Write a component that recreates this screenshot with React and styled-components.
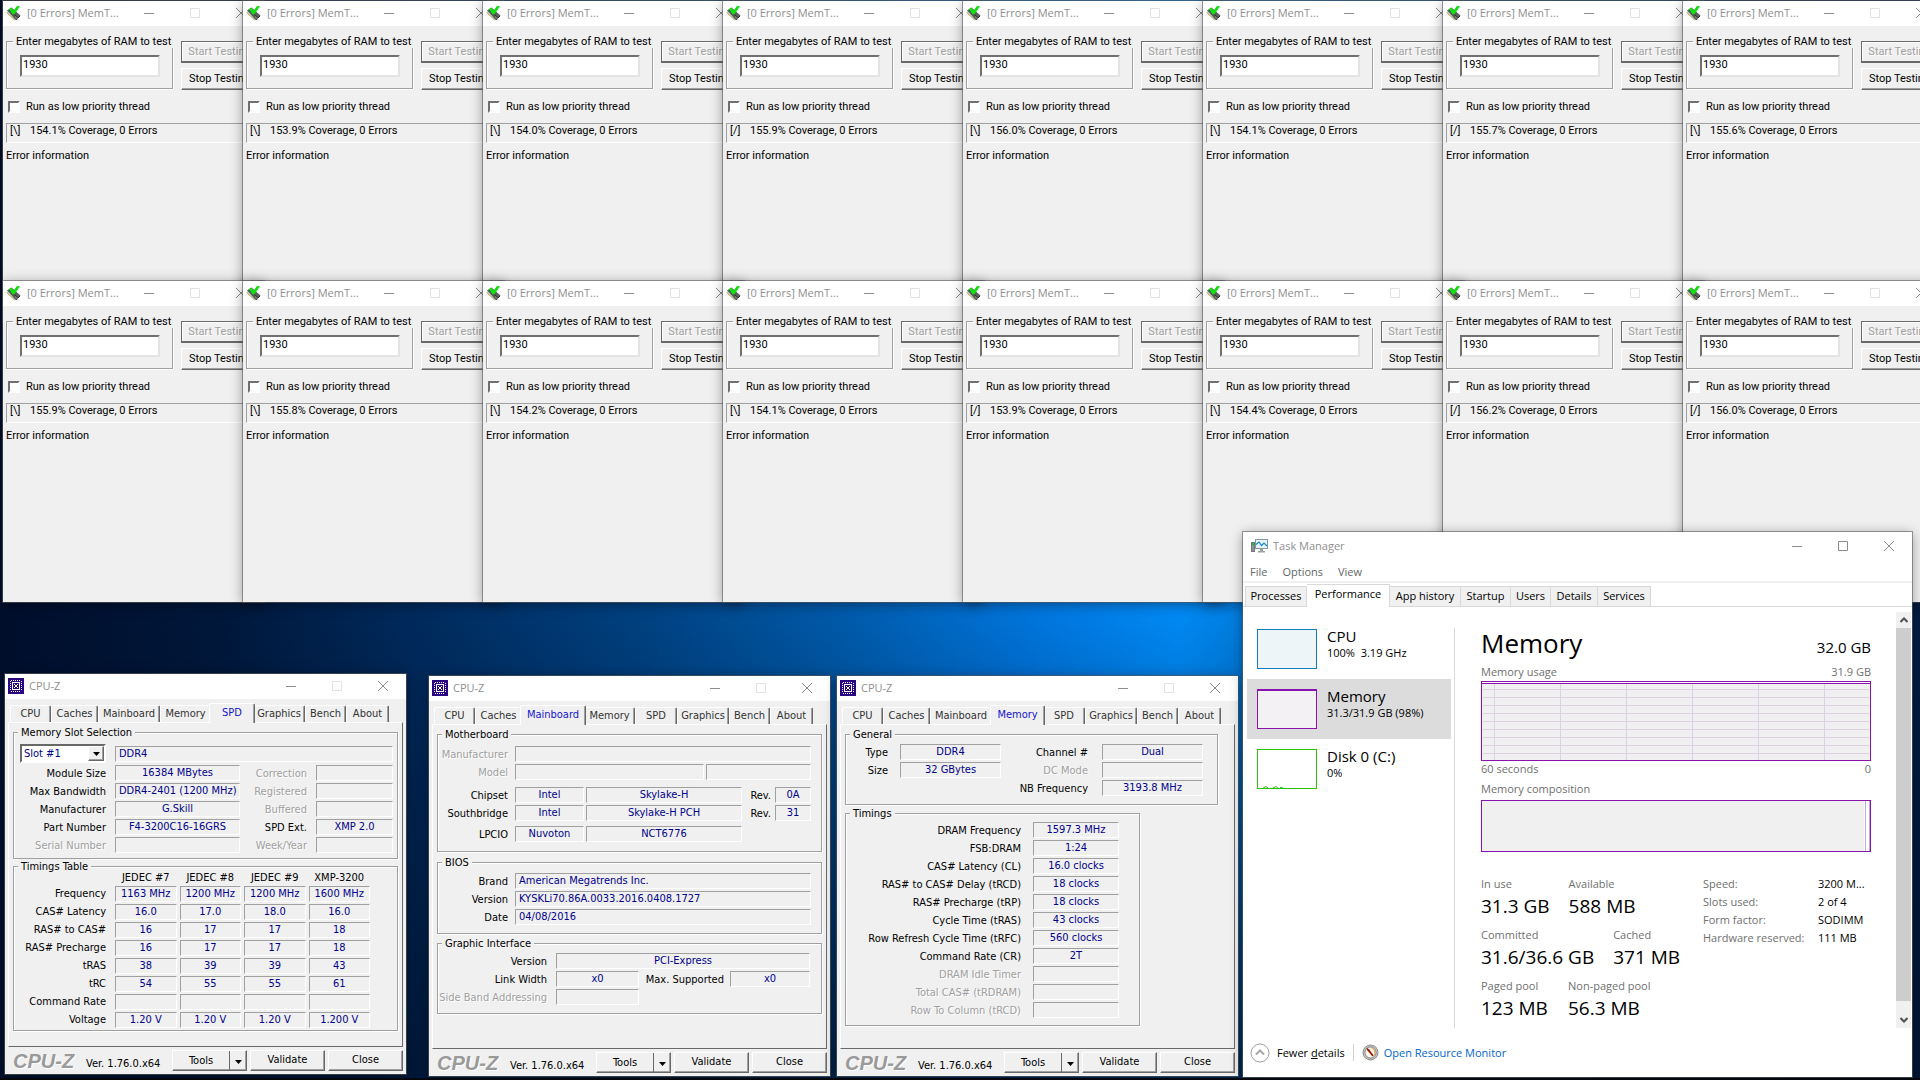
import React from "react";
import styled, { createGlobalStyle, css } from "styled-components";

const face = "#f0f0f0";
const shade = "#a0a0a0";
const dark = "#696969";
const navy = "#00008b";
const purple = "#8b12ae";

const memFont = 'Roboto, "Liberation Sans", Arial, sans-serif';
const cpuzFont = '"DejaVu Sans Condensed", Tahoma, "DejaVu Sans", sans-serif';
const uiFont = '"Open Sans", "Segoe UI", "Noto Sans", sans-serif';

const GlobalStyle = createGlobalStyle`
  *, *::before, *::after { box-sizing: border-box; }
  body { margin: 0; background: #00102c; color: #000; }
  button, input, select { font: inherit; color: inherit; }
`;

/* ---------- desktop and windows ---------- */

const Desktop = styled.main`
  position: relative;
  min-height: 100vh;
  overflow: hidden;
  border-bottom: 2px solid #05070c;
  background:
    linear-gradient(180deg, transparent 620px, rgba(0, 18, 45, 0.25) 760px, rgba(0, 18, 45, 0.75) 100%),
    linear-gradient(90deg, #000e2b 0, #00173a 220px, #002a5c 420px, #00407f 640px,
      #0059a8 840px, #0075dc 1040px, #0088f2 1180px, #0070c8 1300px, #002450 1800px, #001d45 100%);
`;

const Window = styled.section`
  position: absolute;
  left: ${(p) => p.$x}px;
  top: ${(p) => p.$y}px;
  width: ${(p) => p.$width}px;
  min-height: ${(p) => p.$height}px;
  display: flex;
  flex-direction: column;
  background: ${(p) => p.$fill || face};
  box-shadow: 0 0 0 1px rgba(90, 90, 90, 0.6), 0 2px 12px rgba(0, 0, 0, 0.4);
  white-space: nowrap;
`;

const TitleBar = styled.header`
  display: flex;
  align-items: center;
  height: ${(p) => p.$height || 25}px;
  padding: 0 0 2px ${(p) => p.$inset || 3}px;
  background: #fff;
  color: #8f8f8f;
  font: 11px/16px ${uiFont};
`;

const TitleText = styled.h1`
  flex: 1;
  margin: 0 0 0 5px;
  font: inherit;
`;

const CaptionButton = styled.button`
  display: flex;
  justify-content: center;
  align-items: center;
  width: 46px;
  height: 22px;
  padding: 0;
  border: 0;
  background: none;
  color: ${(p) => (p.disabled ? "#e2e2e2" : "#8c8c8c")};
`;

const captionShapes = {
  Minimize: "M0 5.5H10",
  Maximize: "M.5.5H9.5V9.5H.5Z",
  Close: "M0 0L10 10M10 0L0 10",
};

function CaptionButtons({ maximizable }) {
  return Object.entries(captionShapes).map(([name, d]) => (
    <CaptionButton key={name} aria-label={name} disabled={name === "Maximize" && !maximizable}>
      <svg width="10" height="10" fill="none" stroke="currentColor">
        <path d={d} />
      </svg>
    </CaptionButton>
  ));
}

/* ---------- classic controls ---------- */

const Group = styled.fieldset`
  min-width: 0;
  margin: ${(p) => p.$above || 0}px 0 0;
  padding: ${(p) => p.$pad || 0}px 0 0;
  width: ${(p) => (p.$width ? p.$width + "px" : "auto")};
  min-height: ${(p) => p.$height}px;
  border: 1px solid ${shade};
  box-shadow: 1px 1px 0 #fff, inset 1px 1px 0 #fff;
`;

const GroupTitle = styled.legend`
  margin-left: ${(p) => p.$indent || 4}px;
  padding: 2px 3px 0;
  line-height: 12px;
  background: ${face};
`;

const raised = css`
  border: 1px solid;
  border-color: #fff ${dark} ${dark} #fff;
  box-shadow: inset -1px -1px 0 ${shade};
  background: ${face};
`;

const sunken = css`
  border: 1px solid;
  border-color: ${shade} #fff #fff ${shade};
`;

/* ---------- MemTest ---------- */

const MemBody = styled.form`
  padding: 8px 3px 0;
  font: 11px/14px ${memFont};
`;

const MemTop = styled.div`
  display: flex;
  align-items: flex-start;
  gap: 8px;
`;

const AmountInput = styled.input`
  display: block;
  width: 140px;
  height: 22px;
  margin: 7px 0 0 13px;
  padding: 0 1px 3px;
  border: 2px solid;
  border-color: #707070 #e3e3e3 #e3e3e3 #707070;
  border-radius: 0;
  background: #fff;
`;

const MemButtons = styled.div`
  display: flex;
  flex-direction: column;
  gap: 5px;
  padding-top: 7px;
`;

const MemButton = styled.button`
  ${raised}
  width: 77px;
  height: 22px;
  padding: 0;
  &:disabled {
    border-color: ${dark};
    border-bottom-width: 2px;
    box-shadow: inset 1px 1px 0 #fff;
    color: ${shade};
    text-shadow: 1px 1px 0 #fff;
  }
`;

const PriorityLabel = styled.label`
  display: flex;
  align-items: center;
  gap: 6px;
  margin: 10px 0 0 2px;
`;

const Tick = styled.input`
  appearance: none;
  width: 12px;
  height: 12px;
  margin: 0;
  border: 2px solid;
  border-color: #707070 #fff #fff #707070;
  background: #fff;
`;

const MemStatus = styled.p`
  ${sunken}
  display: flex;
  height: 20px;
  margin: 9px 0 0;
  padding: 0 0 0 3px;
  line-height: 14px;
`;

const Spinner = styled.span`
  width: 20px;
`;

const MemNote = styled.p`
  margin: 6px 0 0;
`;

function MemTestIcon() {
  return (
    <svg width="16" height="16" viewBox="0 0 16 16">
      <path d="M1 5.5 5.5 2.5 14.5 10.5 9.5 15Z" fill="#5b5b5b" />
      <path d="M1 6.5 9 14.8 8.4 15.6.6 8Z" fill="#b8b86a" />
      <path d="M3 4.5 11.8 13M10 14.8 14 11" stroke="#2a2a2a" strokeWidth="1" />
      <path d="M9 11.5 12.3 14.6" stroke="#999" strokeWidth="1" />
      <path d="M2.8 4.2 5 2.6 7.6 5.6 11.2.8 14 1.6 8.2 9.6 6.8 9.4Z" fill="#12e012" />
    </svg>
  );
}

function MemTest({ x, y, spin, coverage, id }) {
  return (
    <Window $x={x} $y={y} $width={261} $height={321}>
      <TitleBar>
        <MemTestIcon />
        <TitleText>[0 Errors] MemT...</TitleText>
        <CaptionButtons />
      </TitleBar>
      <MemBody onSubmit={(e) => e.preventDefault()}>
        <MemTop>
          <Group $width={167} $height={55}>
            <GroupTitle $indent={6}>
              <label htmlFor={id}>Enter megabytes of RAM to test</label>
            </GroupTitle>
            <AmountInput id={id} defaultValue="1930" />
          </Group>
          <MemButtons>
            <MemButton type="button" disabled>Start Testing</MemButton>
            <MemButton type="button">Stop Testing</MemButton>
          </MemButtons>
        </MemTop>
        <PriorityLabel>
          <Tick type="checkbox" />
          Run as low priority thread
        </PriorityLabel>
        <MemStatus>
          <Spinner>[{spin}]</Spinner>
          {coverage}% Coverage, 0 Errors
        </MemStatus>
        <MemNote>Error information</MemNote>
      </MemBody>
    </Window>
  );
}

const memRows = [
  [["\\", "154.1"], ["\\", "153.9"], ["\\", "154.0"], ["/", "155.9"], ["\\", "156.0"], ["\\", "154.1"], ["/", "155.7"], ["\\", "155.6"]],
  [["\\", "155.9"], ["\\", "155.8"], ["\\", "154.2"], ["\\", "154.1"], ["/", "153.9"], ["\\", "154.4"], ["/", "156.2"], ["/", "156.0"]],
];

/* ---------- CPU-Z ---------- */

const TabStrip = styled.nav`
  display: flex;
  align-items: flex-end;
  height: 23px;
  padding-left: 5px;
  color: #333;
`;

const CpuzTab = styled.button`
  width: ${(p) => p.$width}px;
  height: 17px;
  padding: 0;
  border: 1px solid;
  border-color: #fff ${dark} transparent #fff;
  border-bottom: 0;
  border-radius: 2px 2px 0 0;
  box-shadow: inset -1px 0 0 ${shade};
  background: ${face};
  ${(p) =>
    p["aria-selected"] &&
    css`
      width: ${p.$width + 4}px;
      height: 20px;
      margin: 0 -2px -1px;
      padding-bottom: 2px;
      z-index: 1;
      color: #1414d2;
    `}
`;

const CpuzPanel = styled.div`
  flex: 1;
  margin: 0 3px;
  padding: 2px 4px 0;
  border: 1px solid;
  border-color: #fff ${dark} ${dark} #fff;
  box-shadow: inset -1px -1px 0 ${face};
`;

const CpuzMain = styled.div`
  flex: 1;
  display: flex;
  flex-direction: column;
  font: 11px/14px ${cpuzFont};
`;

const CpuzFooter = styled.footer`
  display: flex;
  align-items: center;
  gap: 3px;
  height: 27px;
  padding: 0 3px 0 8px;
`;

const CpuzLogo = styled.strong`
  width: 70px;
  color: #9a9a9a;
  text-shadow: 1px 1px 0 #fff;
  font: italic bold 20px/24px "Liberation Sans", Arial, sans-serif;
`;

const Version = styled.span`
  flex: 1;
  padding-top: 7px;
`;

const PushButton = styled.button`
  ${raised}
  width: 75px;
  height: 21px;
  padding: 0 0 1px;
`;

const SplitButton = styled.div`
  display: flex;
  width: 75px;
  ${raised}
`;

const SplitPart = styled.button`
  flex: ${(p) => (p.$arrow ? "0 0 17px" : 1)};
  height: 19px;
  padding: 0;
  border: 0;
  border-left: ${(p) => (p.$arrow ? `1px solid ${dark}` : 0)};
  background: none;
`;

const Row = styled.div`
  display: grid;
  grid-template-columns: ${(p) => p.$cols};
  align-items: center;
  column-gap: ${(p) => p.$gap || 2}px;
  margin-bottom: ${(p) => p.$after || 2}px;
  line-height: 14px;
`;

const Label = styled.span`
  text-align: right;
  padding: 2px ${(p) => p.$pad || 0}px 0 0;
  color: ${(p) => (p.$off ? shade : "#000")};
  text-shadow: ${(p) => (p.$off ? "1px 1px 0 #fff" : "none")};
`;

const Field = styled.output`
  ${sunken}
  display: block;
  height: 16px;
  padding: 0 3px;
  line-height: 14px;
  text-align: ${(p) => (p.$left ? "left" : "center")};
  color: ${navy};
`;

const SlotSelect = styled.select`
  appearance: none;
  width: 86px;
  height: 19px;
  padding: 0 2px;
  border: 2px solid;
  border-color: ${dark} #fff #fff ${dark};
  border-radius: 0;
  background: #fff;
  color: ${navy};
`;

const SelectBox = styled.div`
  position: relative;
  justify-self: end;
  width: 86px;
  display: flex;
`;

const SelectArrow = styled.span`
  ${raised}
  position: absolute;
  right: 2px;
  top: 2px;
  width: 16px;
  height: 15px;
  display: flex;
  justify-content: center;
  align-items: center;
  pointer-events: none;
`;

const TimingTable = styled.table`
  table-layout: fixed;
  width: 359px;
  margin-top: -4px;
  border-spacing: 3px 2px;
  thead th { height: 13px; padding: 0; font-weight: normal; line-height: 13px; }
  tbody th { padding: 0 6px 0 0; font-weight: normal; text-align: right; }
  td { padding: 0; }
`;

const LabelColumn = styled.col`
  width: 95px;
`;

function DownArrow() {
  return (
    <svg width="7" height="4">
      <path d="M0 0H7L3.5 4Z" fill="#000" />
    </svg>
  );
}

function CpuzIcon() {
  const pins = [4, 6, 8, 10, 12];
  return (
    <svg width="16" height="16" viewBox="0 0 16 16" shapeRendering="crispEdges">
      <rect width="16" height="16" fill="#2b0683" />
      <g fill="#fff">
        {pins.map((p) => (
          <g key={p}>
            <rect x={p - 1} y="2" width="1" height="1" />
            <rect x={p - 1} y="13" width="1" height="1" />
            <rect x="2" y={p - 1} width="1" height="1" />
            <rect x="13" y={p - 1} width="1" height="1" />
          </g>
        ))}
      </g>
      <rect x="4.5" y="4.5" width="7" height="7" fill="none" stroke="#fff" />
      <path d="M6 6H7V7H9V6H10V7H9V9H10V10H9V9H7V10H6V9H7V7H6Z" fill="#fff" />
    </svg>
  );
}

const tabs = [["CPU", 41], ["Caches", 47], ["Mainboard", 62], ["Memory", 51], ["SPD", 42], ["Graphics", 52], ["Bench", 41], ["About", 43]];

function CpuzWindow({ x, y, tab, children }) {
  return (
    <Window $x={x} $y={y} $width={401} $height={400}>
      <TitleBar>
        <CpuzIcon />
        <TitleText>CPU-Z</TitleText>
        <CaptionButtons />
      </TitleBar>
      <CpuzMain>
        <TabStrip role="tablist">
          {tabs.map(([name, width]) => (
            <CpuzTab key={name} role="tab" $width={width} aria-selected={name === tab}>
              {name}
            </CpuzTab>
          ))}
        </TabStrip>
        <CpuzPanel>{children}</CpuzPanel>
        <CpuzFooter>
          <CpuzLogo>CPU-Z</CpuzLogo>
          <Version>Ver. 1.76.0.x64</Version>
          <SplitButton>
            <SplitPart>Tools</SplitPart>
            <SplitPart $arrow aria-label="More tools">
              <DownArrow />
            </SplitPart>
          </SplitButton>
          <PushButton>Validate</PushButton>
          <PushButton>Close</PushButton>
        </CpuzFooter>
      </CpuzMain>
    </Window>
  );
}

const moduleRows = [
  ["Module Size", "16384 MBytes", "Correction", ""],
  ["Max Bandwidth", "DDR4-2401 (1200 MHz)", "Registered", ""],
  ["Manufacturer", "G.Skill", "Buffered", ""],
  ["Part Number", "F4-3200C16-16GRS", "SPD Ext.", "XMP 2.0"],
  ["Serial Number", "", "Week/Year", ""],
];

const timingHeads = ["JEDEC #7", "JEDEC #8", "JEDEC #9", "XMP-3200"];
const timingTable = [
  ["Frequency", "1163 MHz", "1200 MHz", "1200 MHz", "1600 MHz"],
  ["CAS# Latency", "16.0", "17.0", "18.0", "16.0"],
  ["RAS# to CAS#", "16", "17", "17", "18"],
  ["RAS# Precharge", "16", "17", "17", "18"],
  ["tRAS", "38", "39", "39", "43"],
  ["tRC", "54", "55", "55", "61"],
  ["Command Rate", "", "", "", ""],
  ["Voltage", "1.20 V", "1.20 V", "1.20 V", "1.200 V"],
];

function SpdPage() {
  return (
    <>
      <Group $height={134} $pad={5}>
        <GroupTitle>Memory Slot Selection</GroupTitle>
        <Row $cols="92px 278px" $gap={9}>
          <SelectBox>
            <SlotSelect aria-label="Memory slot" defaultValue="1">
              <option value="1">Slot #1</option>
            </SlotSelect>
            <SelectArrow>
              <DownArrow />
            </SelectArrow>
          </SelectBox>
          <Field $left>DDR4</Field>
        </Row>
        {moduleRows.map(([a, av, b, bv]) => (
          <Row key={a} $cols="92px 125px 58px 77px" $gap={9}>
            <Label $off={!av}>{a}</Label>
            <Field>{av}</Field>
            <Label $off={!bv}>{b}</Label>
            <Field>{bv}</Field>
          </Row>
        ))}
      </Group>
      <Group $height={172}>
        <GroupTitle>Timings Table</GroupTitle>
        <TimingTable>
          <colgroup>
            <LabelColumn />
          </colgroup>
          <thead>
            <tr>
              <td />
              {timingHeads.map((h) => (
                <th key={h} scope="col">{h}</th>
              ))}
            </tr>
          </thead>
          <tbody>
            {timingTable.map(([name, ...values]) => (
              <tr key={name}>
                <th scope="row">{name}</th>
                {values.map((v, i) => (
                  <td key={i}>
                    <Field>{v}</Field>
                  </td>
                ))}
              </tr>
            ))}
          </tbody>
        </TimingTable>
      </Group>
    </>
  );
}

function MainboardPage() {
  return (
    <>
      <Group $height={125} $pad={5}>
        <GroupTitle>Motherboard</GroupTitle>
        <Row $cols="75px 296px">
          <Label $off $pad={5}>Manufacturer</Label>
          <Field />
        </Row>
        <Row $cols="75px 189px 105px" $after={7}>
          <Label $off $pad={5}>Model</Label>
          <Field />
          <Field />
        </Row>
        <Row $cols="75px 69px 156px 29px 36px">
          <Label $pad={5}>Chipset</Label>
          <Field>Intel</Field>
          <Field>Skylake-H</Field>
          <Label $pad={2}>Rev.</Label>
          <Field>0A</Field>
        </Row>
        <Row $cols="75px 69px 156px 29px 36px" $after={5}>
          <Label $pad={5}>Southbridge</Label>
          <Field>Intel</Field>
          <Field>Skylake-H PCH</Field>
          <Label $pad={2}>Rev.</Label>
          <Field>31</Field>
        </Row>
        <Row $cols="75px 69px 156px">
          <Label $pad={5}>LPCIO</Label>
          <Field>Nuvoton</Field>
          <Field>NCT6776</Field>
        </Row>
      </Group>
      <Group $above={3} $height={79} $pad={4}>
        <GroupTitle>BIOS</GroupTitle>
        {[
          ["Brand", "American Megatrends Inc."],
          ["Version", "KYSKLi70.86A.0033.2016.0408.1727"],
          ["Date", "04/08/2016"],
        ].map(([name, value]) => (
          <Row key={name} $cols="75px 296px">
            <Label $pad={5}>{name}</Label>
            <Field $left>{value}</Field>
          </Row>
        ))}
      </Group>
      <Group $above={2} $height={78} $pad={3}>
        <GroupTitle>Graphic Interface</GroupTitle>
        <Row $cols="116px 254px">
          <Label $pad={7}>Version</Label>
          <Field>PCI-Express</Field>
        </Row>
        <Row $cols="116px 83px 87px 80px">
          <Label $pad={7}>Link Width</Label>
          <Field>x0</Field>
          <Label $pad={4}>Max. Supported</Label>
          <Field>x0</Field>
        </Row>
        <Row $cols="116px 83px">
          <Label $off $pad={7}>Side Band Addressing</Label>
          <Field />
        </Row>
      </Group>
    </>
  );
}

const dramTimings = [
  ["DRAM Frequency", "1597.3 MHz"],
  ["FSB:DRAM", "1:24"],
  ["CAS# Latency (CL)", "16.0 clocks"],
  ["RAS# to CAS# Delay (tRCD)", "18 clocks"],
  ["RAS# Precharge (tRP)", "18 clocks"],
  ["Cycle Time (tRAS)", "43 clocks"],
  ["Row Refresh Cycle Time (tRFC)", "560 clocks"],
  ["Command Rate (CR)", "2T"],
  ["DRAM Idle Timer", ""],
  ["Total CAS# (tRDRAM)", ""],
  ["Row To Column (tRCD)", ""],
];

function MemoryPage() {
  return (
    <>
      <Group $width={373} $height={78} $pad={3}>
        <GroupTitle>General</GroupTitle>
        <Row $cols="42px 101px 77px 101px" $gap={12}>
          <Label>Type</Label>
          <Field>DDR4</Field>
          <Label $pad={2}>Channel #</Label>
          <Field>Dual</Field>
        </Row>
        <Row $cols="42px 101px 77px 101px" $gap={12}>
          <Label>Size</Label>
          <Field>32 GBytes</Field>
          <Label $off $pad={2}>DC Mode</Label>
          <Field />
        </Row>
        <Row $cols="244px 101px" $gap={12}>
          <Label $pad={2}>NB Frequency</Label>
          <Field>3193.8 MHz</Field>
        </Row>
      </Group>
      <Group $width={295} $above={1} $height={220} $pad={2}>
        <GroupTitle>Timings</GroupTitle>
        {dramTimings.map(([name, value]) => (
          <Row key={name} $cols="175px 86px" $gap={12}>
            <Label $off={!value}>{name}</Label>
            <Field>{value}</Field>
          </Row>
        ))}
      </Group>
    </>
  );
}

/* ---------- Task Manager ---------- */

const MenuBar = styled.nav`
  display: flex;
  gap: 15px;
  height: 21px;
  padding: 0 7px;
  border-bottom: 2px solid ${face};
`;

const MenuItem = styled.button`
  padding: 0;
  border: 0;
  background: none;
  color: #666;
`;

const TaskMain = styled.div`
  flex: 1;
  display: flex;
  flex-direction: column;
  font: 11px/16px ${uiFont};
`;

const TaskTabs = styled.div`
  display: flex;
  align-items: flex-end;
  height: 24px;
  padding-left: 2px;
  border-bottom: 1px solid #d9d9d9;
`;

const TaskTab = styled.button`
  width: ${(p) => p.$width}px;
  height: 20px;
  padding: 0 0 1px;
  border: 1px solid #d9d9d9;
  border-width: 1px 1px 0 0;
  background: ${face};
  &:first-child { border-left-width: 1px; }
  ${(p) =>
    p["aria-selected"] &&
    css`
      height: 23px;
      margin-bottom: -1px;
      padding-bottom: 4px;
      background: #fff;
    `}
`;

const TaskContent = styled.div`
  flex: 1;
  display: flex;
  padding: 5px 1px 0 4px;
`;

const ResourceList = styled.ul`
  flex: 0 0 204px;
  margin: 7px 3px 0 0;
  padding: 0;
  list-style: none;
`;

const Resource = styled.li`
  display: flex;
  gap: 10px;
  height: 60px;
  padding: 10px;
  background: ${(p) => (p.$selected ? "#dcdcdc" : "none")};
`;

const ResourceThumb = styled.svg`
  width: 60px;
  height: 40px;
  border: 1px solid ${(p) => p.$color};
  border-top-width: ${(p) => p.$top || 1}px;
  background: ${(p) => p.$fill};
`;

const ResourceName = styled.h2`
  margin: -3px 0 0;
  font: 15px/20px ${uiFont};
`;

const ResourceNote = styled.p`
  margin: 0;
  line-height: 14px;
`;

const Detail = styled.div`
  flex: 1;
  margin-top: 16px;
  padding: 0 25px 0 26px;
  border-left: 1px solid #d9d9d9;
`;

const DetailHead = styled.div`
  display: flex;
  justify-content: space-between;
  align-items: baseline;
  margin-bottom: 6px;
`;

const DetailTitle = styled.h2`
  margin: 0;
  font: 26px/30px ${uiFont};
`;

const DetailTotal = styled.span`
  font: 15px/20px ${uiFont};
`;

const Caption = styled.div`
  display: flex;
  justify-content: space-between;
  height: ${(p) => p.$height}px;
  line-height: 16px;
  color: #707070;
`;

const Chart = styled.svg`
  display: block;
  width: 100%;
  height: ${(p) => p.$height}px;
  border: 1px solid ${purple};
`;

const Stats = styled.div`
  display: flex;
  justify-content: space-between;
  margin-top: 24px;
`;

const StatGroups = styled.div`
  display: grid;
  gap: 9px;
`;

const StatRow = styled.dl`
  display: flex;
  gap: 19px;
  margin: 0;
`;

const Stat = styled.div`
  min-width: 68px;
  height: 42px;
  dt { color: #707070; line-height: 16px; }
  dd { margin: 2px 0 0; font: 19px/24px ${uiFont}; }
`;

const Facts = styled.dl`
  display: grid;
  grid-template-columns: 115px 53px;
  grid-auto-rows: 18px;
  margin: 0;
  line-height: 16px;
  dt { color: #707070; }
  dd { margin: 0; }
`;

const ScrollBar = styled.div`
  display: flex;
  flex-direction: column;
  width: 15px;
  background: ${face};
`;

const ScrollButton = styled.button`
  display: flex;
  justify-content: center;
  align-items: center;
  height: 16px;
  padding: 0;
  border: 0;
  background: none;
`;

const ScrollThumb = styled.div`
  flex: 1;
  margin-bottom: 11px;
  background: #cdcdcd;
`;

const TaskFooter = styled.footer`
  display: flex;
  align-items: center;
  height: 49px;
  padding-left: 7px;
`;

const FewerButton = styled.button`
  display: flex;
  align-items: center;
  gap: 7px;
  padding: 0;
  border: 0;
  background: none;
`;

const MonitorLink = styled.a`
  display: flex;
  align-items: center;
  gap: 5px;
  margin-left: 8px;
  padding-left: 8px;
  border-left: 1px solid #d0d0d0;
  color: #0066cc;
  text-decoration: none;
`;

function TaskIcon() {
  return (
    <svg width="17" height="16" viewBox="0 0 17 16">
      <rect x="0.5" y="4.5" width="3" height="9" fill="#8d9499" stroke="#70777c" />
      <rect x="1" y="5" width="2" height="2" fill="#1bc21b" />
      <rect x="4.5" y="1.5" width="12" height="9" fill="#e4f5fc" stroke="#8a959b" />
      <path d="M5 6.5 8 4 10.5 7.5 13 5 16 8" fill="none" stroke="#1588c9" strokeWidth="1.2" />
      <path d="M9 11H12V13H14V14.5H7V13H9Z" fill="#99a2a7" />
    </svg>
  );
}

function GaugeIcon() {
  return (
    <svg width="17" height="17" viewBox="0 0 17 17">
      <circle cx="8.5" cy="8.5" r="7.5" fill="#c9c9c9" stroke="#8a8a8a" />
      <circle cx="8.5" cy="8.5" r="5.6" fill="#fbf6ea" stroke="#7d7d7d" />
      <path d="M9.5 4.2A4.6 4.6 0 0 1 12 11.2" fill="none" stroke="#e8a33c" />
      <path d="M4.6 4 7.2 5.2 11.6 11.6 10.4 12.4 5.2 6.2Z" fill="#c22a10" />
      <path d="M5 4.4 11 12" stroke="#4a1208" strokeWidth="0.8" />
    </svg>
  );
}

const taskTabs = [["Processes", 62], ["Performance", 83], ["App history", 71], ["Startup", 50], ["Users", 40], ["Details", 47], ["Services", 53]];

const statRows = [
  [["In use", "31.3 GB"], ["Available", "588 MB"]],
  [["Committed", "31.6/36.6 GB"], ["Cached", "371 MB"]],
  [["Paged pool", "123 MB"], ["Non-paged pool", "56.3 MB"]],
];

const facts = [["Speed:", "3200 M..."], ["Slots used:", "2 of 4"], ["Form factor:", "SODIMM"], ["Hardware reserved:", "111 MB"]];

function UsageChart() {
  const rows = [7, 15, 23, 31, 39, 47, 55, 63, 71];
  const columns = [12, 78, 144, 210, 276, 342];
  return (
    <Chart $height={80} viewBox="0 0 388 78" preserveAspectRatio="none" shapeRendering="crispEdges" aria-label="Memory usage chart">
      <rect y="2" width="388" height="76" fill="#f1f0f1" />
      <g stroke="#decfe4">
        {rows.map((y) => <path key={y} d={`M1 ${y + 0.5}H387`} />)}
        {columns.map((x) => <path key={x} d={`M${x + 0.5} 2V78`} />)}
      </g>
      <path d="M0 1.5H388" stroke={purple} />
    </Chart>
  );
}

function TaskManager() {
  return (
    <Window $x={1243} $y={532} $width={669} $height={545} $fill="#fff">
      <TitleBar $height={30} $inset={8}>
        <TaskIcon />
        <TitleText>Task Manager</TitleText>
        <CaptionButtons maximizable />
      </TitleBar>
      <TaskMain>
        <MenuBar>
          <MenuItem>File</MenuItem>
          <MenuItem>Options</MenuItem>
          <MenuItem>View</MenuItem>
        </MenuBar>
        <TaskTabs role="tablist">
          {taskTabs.map(([name, width]) => (
            <TaskTab key={name} role="tab" $width={width} aria-selected={name === "Performance"}>
              {name}
            </TaskTab>
          ))}
        </TaskTabs>
        <TaskContent>
          <ResourceList>
            <Resource>
              <ResourceThumb $color="#117dbb" $fill="#eef5f9" />
              <div>
                <ResourceName>CPU</ResourceName>
                <ResourceNote>100%&nbsp; 3.19 GHz</ResourceNote>
              </div>
            </Resource>
            <Resource $selected>
              <ResourceThumb $color={purple} $fill="#f3f1f4" $top={2} />
              <div>
                <ResourceName>Memory</ResourceName>
                <ResourceNote>31.3/31.9 GB (98%)</ResourceNote>
              </div>
            </Resource>
            <Resource>
              <ResourceThumb $color="#2cc20a" $fill="#fff" viewBox="0 0 58 38">
                <path d="M5 38 8 36.5 10 38M15 38 18 36.5 20 38M22 38 23 37 25 38" fill="none" stroke="#2cc20a" />
              </ResourceThumb>
              <div>
                <ResourceName>Disk 0 (C:)</ResourceName>
                <ResourceNote>0%</ResourceNote>
              </div>
            </Resource>
          </ResourceList>
          <Detail>
            <DetailHead>
              <DetailTitle>Memory</DetailTitle>
              <DetailTotal>32.0 GB</DetailTotal>
            </DetailHead>
            <Caption $height={17}>
              <span>Memory usage</span>
              <span>31.9 GB</span>
            </Caption>
            <UsageChart />
            <Caption $height={20}>
              <span>60 seconds</span>
              <span>0</span>
            </Caption>
            <Caption $height={19}>Memory composition</Caption>
            <Chart $height={52} viewBox="0 0 388 50" preserveAspectRatio="none" shapeRendering="crispEdges" aria-label="Memory composition chart">
              <rect width="382" height="50" fill="#f0f0f0" />
              <path d="M383.5 0V50M387.5 0V50" stroke="#c7a8d4" />
            </Chart>
            <Stats>
              <StatGroups>
                {statRows.map((row) => (
                  <StatRow key={row[0][0]}>
                    {row.map(([name, value]) => (
                      <Stat key={name}>
                        <dt>{name}</dt>
                        <dd>{value}</dd>
                      </Stat>
                    ))}
                  </StatRow>
                ))}
              </StatGroups>
              <Facts>
                {facts.map(([name, value]) => (
                  <React.Fragment key={name}>
                    <dt>{name}</dt>
                    <dd>{value}</dd>
                  </React.Fragment>
                ))}
              </Facts>
            </Stats>
          </Detail>
          <ScrollBar>
            <ScrollButton aria-label="Scroll up">
              <svg width="8" height="6" fill="none" stroke="#505050" strokeWidth="2">
                <path d="M.5 5 4 1.5 7.5 5" />
              </svg>
            </ScrollButton>
            <ScrollThumb />
            <ScrollButton aria-label="Scroll down">
              <svg width="8" height="6" fill="none" stroke="#505050" strokeWidth="2">
                <path d="M.5 1 4 4.5 7.5 1" />
              </svg>
            </ScrollButton>
          </ScrollBar>
        </TaskContent>
        <TaskFooter>
          <FewerButton>
            <svg width="20" height="20" fill="none">
              <circle cx="10" cy="10" r="9" stroke="#a0a0a0" />
              <path d="M6 11.5 10 7.5 14 11.5" stroke="#a8a8a8" strokeWidth="2" />
            </svg>
            <span>Fewer <u>d</u>etails</span>
          </FewerButton>
          <MonitorLink href="#resource-monitor">
            <GaugeIcon />
            Open Resource Monitor
          </MonitorLink>
        </TaskFooter>
      </TaskMain>
    </Window>
  );
}

export default function App() {
  return (
    <Desktop>
      <GlobalStyle />
      {memRows.map((row, r) =>
        row.map(([spin, coverage], i) => (
          <MemTest key={`${r}-${i}`} id={`amount-${r}-${i}`} x={3 + i * 240} y={1 + r * 280} spin={spin} coverage={coverage} />
        ))
      )}
      <CpuzWindow x={5} y={674} tab="SPD">
        <SpdPage />
      </CpuzWindow>
      <CpuzWindow x={429} y={676} tab="Mainboard">
        <MainboardPage />
      </CpuzWindow>
      <CpuzWindow x={837} y={676} tab="Memory">
        <MemoryPage />
      </CpuzWindow>
      <TaskManager />
    </Desktop>
  );
}
